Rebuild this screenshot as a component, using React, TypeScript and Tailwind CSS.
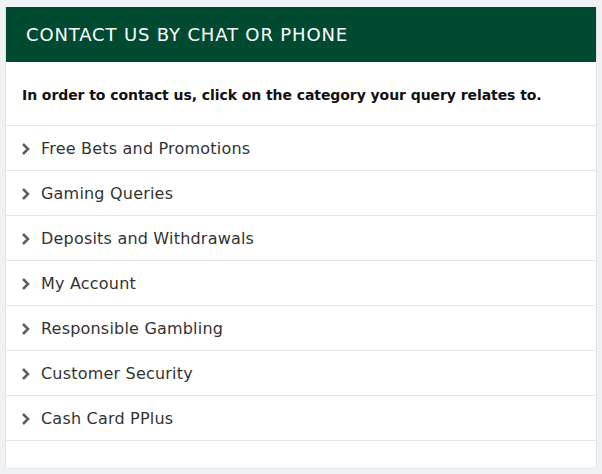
const items = [
  "Free Bets and Promotions",
  "Gaming Queries",
  "Deposits and Withdrawals",
  "My Account",
  "Responsible Gambling",
  "Customer Security",
  "Cash Card PPlus",
];

function Chevron() {
  return (
    <svg width="11" height="14" viewBox="0 0 11 14" className="mr-[10px] shrink-0">
      <path d="M3 2 L8 7 L3 12" fill="none" stroke="#5f5f5f" strokeWidth="2.6" />
    </svg>
  );
}

export default function App() {
  return (
    <div className="w-[602px] h-[474px] bg-[#eef2f5] pt-[7px] pl-[5px] font-['DejaVu_Sans',sans-serif]">
      <div className="w-[592px] h-[460px] bg-white border-l border-r border-[#e2e2e2]">
        <div className="h-[55px] bg-[#004a32] flex items-center pl-[20px] text-white text-[18px] tracking-[0.85px]">
          CONTACT US BY CHAT OR PHONE
        </div>
        <div className="h-[63px] flex items-center pl-[16px] pt-[3px] text-[14px] font-bold text-[#111] tracking-[-0.07px]">
          In order to contact us, click on the category your query relates to.
        </div>
        <div className="border-t border-[#e6e6e6]">
          {items.map((item) => (
            <div
              key={item}
              className="h-[45px] flex items-center border-b border-[#e6e6e6] pl-[14px] pt-[2px] text-[16px] text-[#333] tracking-[0.2px]"
            >
              <Chevron />
              {item}
            </div>
          ))}
        </div>
      </div>
    </div>
  );
}
